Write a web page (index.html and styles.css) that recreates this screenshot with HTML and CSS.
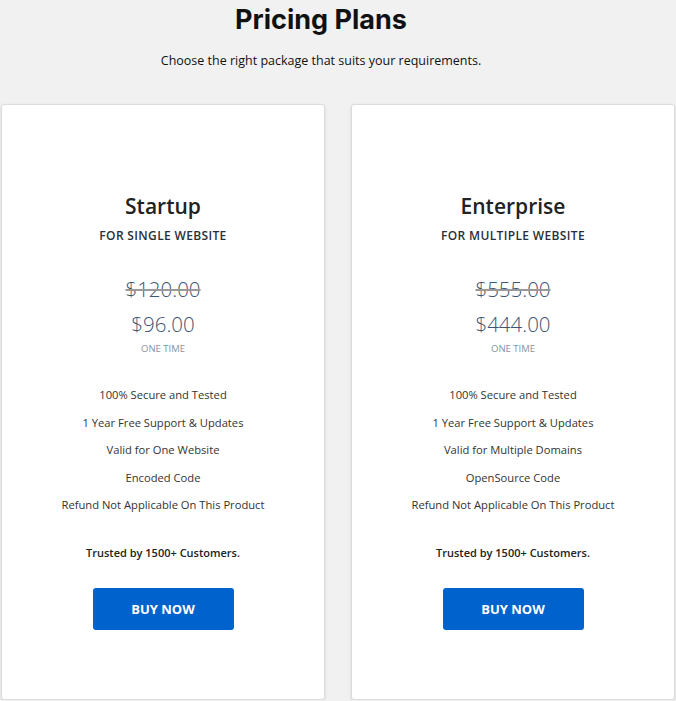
FILE: index.html
```html
<!DOCTYPE html>
<html>
<head>
<meta charset="utf-8">
<link rel="stylesheet" href="styles.css">
</head>
<body>
<div class="page">
  <header class="head">
    <h1 class="title">Pricing Plans</h1>
    <p class="subtitle">Choose the right package that suits your requirements.</p>
  </header>
  <div class="plans">
    <div class="card">
      <h2 class="plan-name">Startup</h2>
      <div class="plan-for">FOR SINGLE WEBSITE</div>
      <div class="old-price">$120.00</div>
      <div class="price">$96.00</div>
      <div class="period">ONE TIME</div>
      <ul class="features">
        <li>100% Secure and Tested</li>
        <li>1 Year Free Support &amp; Updates</li>
        <li>Valid for One Website</li>
        <li>Encoded Code</li>
        <li>Refund Not Applicable On This Product</li>
      </ul>
      <div class="trusted">Trusted by 1500+ Customers.</div>
      <a class="buy" href="#">BUY NOW</a>
    </div>
    <div class="card">
      <h2 class="plan-name">Enterprise</h2>
      <div class="plan-for">FOR MULTIPLE WEBSITE</div>
      <div class="old-price">$555.00</div>
      <div class="price">$444.00</div>
      <div class="period">ONE TIME</div>
      <ul class="features">
        <li>100% Secure and Tested</li>
        <li>1 Year Free Support &amp; Updates</li>
        <li>Valid for Multiple Domains</li>
        <li>OpenSource Code</li>
        <li>Refund Not Applicable On This Product</li>
      </ul>
      <div class="trusted">Trusted by 1500+ Customers.</div>
      <a class="buy" href="#">BUY NOW</a>
    </div>
  </div>
</div>
</body>
</html>
```
FILE: styles.css
```css
html, body {
  margin: 0;
  padding: 0;
  background: #f1f1f1;
}
body {
  font-family: "Open Sans", "Noto Sans", sans-serif;
  color: #222;
}
.page {
  padding: 0 1px;
}
.head {
  text-align: center;
  height: 104px;
  padding-right: 34px;
}
.title {
  margin: 0;
  padding-top: 2px;
  font-family: "Inter", "Lato", sans-serif;
  font-weight: 700;
  font-size: 27px;
  line-height: 36px;
  color: #111;
}
.subtitle {
  margin: 14px 0 0;
  font-size: 12.5px;
  line-height: 18px;
  color: #111;
}
.plans {
  display: flex;
  gap: 26px;
}
.card {
  width: 324px;
  box-sizing: border-box;
  background: #fff;
  border: 1px solid #dcdcdc;
  border-radius: 3px;
  box-shadow: 0 1px 3px rgba(0,0,0,0.12);
  text-align: center;
  padding: 87px 0 69px;
  display: flex;
  flex-direction: column;
  align-items: center;
}
.plan-name {
  margin: 0;
  font-size: 21px;
  font-weight: 600;
  line-height: 28px;
  color: #222;
}
.plan-for {
  margin-top: 7px;
  font-size: 12px;
  font-weight: 600;
  line-height: 18px;
  color: #2a2f3a;
  letter-spacing: 0.35px;
}
.old-price {
  margin-top: 30px;
  font-size: 20.5px;
  font-weight: 300;
  line-height: 28px;
  color: #3e5473;
  text-decoration: line-through;
  text-decoration-color: #999;
  text-decoration-thickness: 2px;
}
.price {
  margin-top: 7px;
  font-size: 20.5px;
  font-weight: 300;
  line-height: 28px;
  color: #3e5473;
}
.period {
  margin-top: 4px;
  font-size: 9.5px;
  line-height: 14px;
  color: #8494a8;
}
.features {
  list-style: none;
  margin: 25px 0 0;
  padding: 0;
  font-size: 11.2px;
  line-height: 27.5px;
  color: #333;
}
.trusted {
  margin-top: 25px;
  font-size: 11px;
  font-weight: 600;
  line-height: 18px;
  color: #222;
}
.buy {
  margin-top: 26px;
  width: 141px;
  height: 42px;
  line-height: 42px;
  background: #0062cc;
  border-radius: 3px;
  color: #fff;
  font-weight: 700;
  font-size: 13px;
  text-decoration: none;
}
```
